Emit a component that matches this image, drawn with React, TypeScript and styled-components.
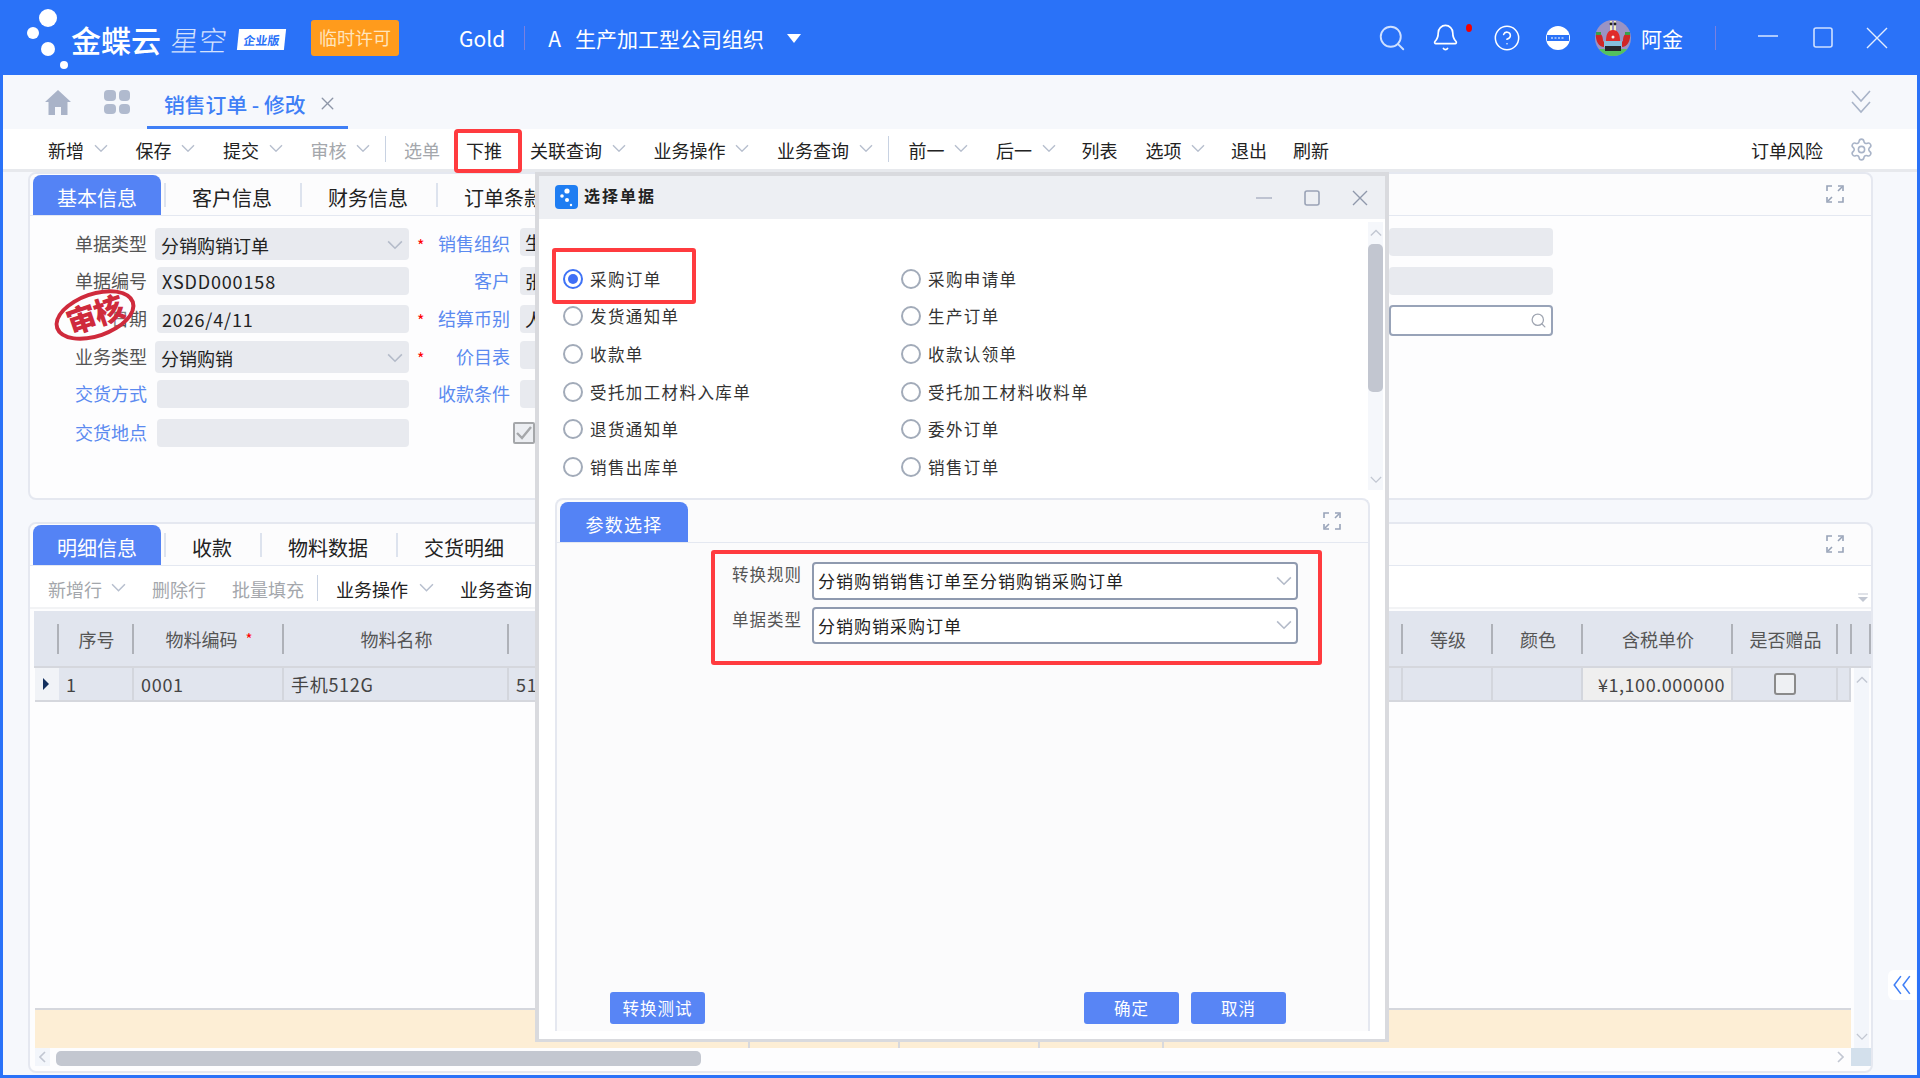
import React from 'react'
import styled, { createGlobalStyle } from 'styled-components'
import { Bell, CircleHelp, Search, Settings, X } from 'lucide-react'

const GlobalStyle = createGlobalStyle`
  html, body {
    margin: 0;
    padding: 0;
    background: #2a72f8;
  }
  * {
    box-sizing: border-box;
  }
  body {
    font-family: "Noto Sans CJK SC", "Noto Sans", sans-serif;
    color: #222;
  }
`

const Chev = ({ color = '#b7bfce', w = 14 }: { color?: string; w?: number }) => (
  <svg width={w} height={w * 0.6} viewBox="0 0 14 8" fill="none" stroke={color} strokeWidth="1.4">
    <polyline points="1,1 7,7 13,1" />
  </svg>
)

const ExpandIcon = () => (
  <svg width="18" height="18" viewBox="0 0 18 18" fill="none" stroke="#98a3b8" strokeWidth="1.6">
    <path d="M1 6V1h5M12 1h5v5M1 12v5h5M17 12v5h-5" />
    <path d="M12 6l4-4M6 12l-4 4" />
  </svg>
)

const LogoMark = () => (
  <svg width="46" height="75" viewBox="0 0 46 75">
    <g fill="#fff">
      <circle cx="23" cy="18" r="9" />
      <circle cx="8" cy="33" r="6" />
      <circle cx="23" cy="49" r="7" />
      <circle cx="39" cy="65" r="4" />
    </g>
  </svg>
)

const HomeIcon = () => (
  <svg width="26" height="25" viewBox="0 0 26 25" fill="#a9b3c8">
    <path d="M13 0L0 12h3.5v13h6.5v-8h6v8h6.500V12H26z" />
  </svg>
)

const Avatar = () => (
  <svg width="36" height="36" viewBox="0 0 36 36">
    <clipPath id="av">
      <circle cx="18" cy="18" r="18" />
    </clipPath>
    <g clipPath="url(#av)">
      <rect width="36" height="36" fill="#9a93c4" />
      <rect y="29" width="36" height="7" fill="#52c25e" />
      <rect x="15" y="1" width="2" height="14" fill="#f0eec0" />
      <rect x="19" y="1" width="2" height="14" fill="#f0eec0" />
      <circle cx="16" cy="4" r="1.4" fill="#222" />
      <circle cx="20" cy="4" r="1.4" fill="#222" />
      <path d="M18 10c6 0 7 6 7 11H11c0-5 1-11 7-11z" fill="#e02a2a" />
      <path d="M1 13c5-1 7 3 7 8l4 3-3 3c-5 0-9-6-8-14z" fill="#cf2626" />
      <path d="M35 13c-5-1-7 3-7 8l-4 3 3 3c5 0 9-6 8-14z" fill="#cf2626" />
      <rect x="1" y="12" width="5" height="3" fill="#3aa04a" />
      <rect x="30" y="12" width="5" height="3" fill="#3aa04a" />
      <rect x="9" y="21" width="18" height="6" fill="#86bedd" />
      <rect x="10" y="26" width="16" height="5" fill="#26262c" />
      <circle cx="18" cy="17" r="1.5" fill="#f5f5f5" />
    </g>
  </svg>
)

const Page = styled.div`
  position: relative;
  width: 1920px;
  height: 1078px;
  overflow: hidden;
  display: flex;
  flex-direction: column;
  background: #2a72f8;
`

const TopBar = styled.header`
  height: 75px;
  flex: none;
  display: flex;
  align-items: center;
  padding: 0 32px 0 25px;
  color: #fff;
`

const BrandMain = styled.span`
  font-size: 30px;
  font-weight: 500;
  line-height: 1;
  margin-top: 2px;
`

const BrandSub = styled.span`
  font-size: 28px;
  font-weight: 300;
  line-height: 1;
  margin: 2px 0 0 10px;
  opacity: 0.8;
  transform: skewX(-6deg);
`

const Edition = styled.span`
  margin: 4px 0 0 11px;
  width: 47px;
  height: 21px;
  background: #fff;
  color: #2a72f8;
  font-size: 12px;
  font-weight: 700;
  line-height: 21px;
  text-align: center;
  transform: skewX(-6deg);
`

const License = styled.span`
  margin-left: 26px;
  width: 88px;
  height: 36px;
  border-radius: 3px;
  background: #ff9b1c;
  color: #ffe5bd;
  font-size: 18px;
  line-height: 35px;
  text-align: center;
`

const OrgText = styled.span<{ $ml: number }>`
  margin: 2px 0 0 ${p => p.$ml}px;
  font-size: 21px;
  line-height: 1;
  white-space: nowrap;
`

const BarDivider = styled.span<{ $ml: number }>`
  margin-left: ${p => p.$ml}px;
  width: 1px;
  height: 24px;
  background: #7a80e0;
`

const Caret = styled.span`
  margin: 2px 0 0 23px;
  width: 0;
  height: 0;
  border-left: 7px solid transparent;
  border-right: 7px solid transparent;
  border-top: 9px solid #fff;
`

const BarRight = styled.div`
  margin-left: auto;
  display: flex;
  align-items: center;
`

const BarSlot = styled.span<{ $ml: number; $w?: number }>`
  position: relative;
  margin-left: ${p => p.$ml}px;
  width: ${p => p.$w ?? 24}px;
  height: 36px;
  display: flex;
  align-items: center;
  justify-content: center;
  svg {
    flex: none;
  }
`

const RedDot = styled.i`
  position: absolute;
  top: 4px;
  right: -15px;
  width: 6px;
  height: 8px;
  border-radius: 50%;
  background: #f40000;
`

const Shell = styled.div`
  flex: 1;
  min-height: 0;
  margin: 0 3px 3px;
  background: #f6f8fc;
  display: flex;
  flex-direction: column;
`

const TabStrip = styled.div`
  height: 54px;
  flex: none;
  display: flex;
  padding: 0 46px 0 42px;
  align-items: center;
`

const GridIcon = styled.div`
  margin-left: 33px;
  width: 26px;
  height: 24px;
  display: grid;
  grid-template-columns: 1fr 1fr;
  gap: 3px;
  span {
    background: #b0bace;
    border-radius: 4px;
  }
`

const PageTab = styled.div`
  margin-left: 17px;
  width: 201px;
  height: 54px;
  padding: 6px 0 0 17px;
  border-bottom: 3px solid #3f7ff6;
  display: flex;
  align-items: center;
  gap: 11px;
  color: #3f7ff6;
  font-size: 20.8px;
  font-weight: 500;
  white-space: nowrap;
`

const CollapseIcon = styled.span`
  margin-left: auto;
  display: flex;
`

const Toolbar = styled.nav`
  height: 40px;
  flex: none;
  background: #fff;
  box-shadow: 0 3px 0 #e7e9ed;
  display: flex;
  align-items: center;
  gap: 28px;
  padding: 0 43px 0 45px;
`

const ToolItem = styled.span<{ $off?: boolean; $marked?: boolean; $chevGap?: number }>`
  position: relative;
  display: inline-flex;
  align-items: center;
  gap: ${p => p.$chevGap ?? 9.5}px;
  font-size: 18px;
  line-height: 1;
  padding-top: 2px;
  color: ${p => (p.$off ? '#a4a7ac' : '#222')};
  white-space: nowrap;
  svg {
    margin-top: -4px;
  }
  ${p =>
    p.$marked
      ? `&::after {
          content: '';
          position: absolute;
          left: -14px;
          right: -20px;
          top: -10px;
          bottom: -14px;
          border: 4px solid #ff3b3f;
          border-radius: 4px;
        }`
      : ''}
`

const NoChevGap = styled.span`
  margin-left: -2px;
`

const ToolDivider = styled.span<{ $after?: number }>`
  width: 1px;
  height: 26px;
  margin: 0 ${p => -13 + (p.$after ?? 0)}px 0 -13px;
  background: #c8d2e2;
`

const ToolRight = styled.div`
  margin-left: auto;
  display: flex;
  align-items: center;
  gap: 26px;
`

const Content = styled.main`
  flex: 1;
  min-height: 0;
  padding: 3px 44px 2px 25px;
  display: flex;
  flex-direction: column;
  gap: 22px;
`

const Panel = styled.section<{ $grow?: boolean }>`
  ${p => (p.$grow ? 'flex: 1; min-height: 0;' : 'height: 328px; flex: none;')}
  background: #fdfdfe;
  border: 2px solid #e5e8f0;
  border-radius: 8px;
  display: flex;
  flex-direction: column;
`

const PanelHead = styled.div`
  height: 42px;
  flex: none;
  display: flex;
  align-items: flex-end;
  padding: 0 27px 0 3px;
  border-bottom: 1px solid #e4e8f1;
  background: #fcfcfd;
  border-radius: 8px 8px 0 0;
`

const HeadTab = styled.div<{ $active?: boolean }>`
  height: 40px;
  padding: 4px ${p => (p.$active ? 24 : 28)}px 0;
  font-size: 20px;
  line-height: 38px;
  white-space: nowrap;
  overflow: visible;
  ${p =>
    p.$active
      ? `background: #5483f5; color: #fff; border-radius: 8px 8px 0 0; margin-right: 3px;`
      : `color: #222; position: relative;
         &::before { content: ''; position: absolute; left: 0; top: 8px; height: 24px; width: 2px; background: #dde3ee; }`}
`

const HeadAction = styled.span`
  margin: 0 0 12px auto;
  display: flex;
`

const FormGrid = styled.div`
  padding: 12px 0 0;
  display: grid;
  grid-template-columns: 127px 252px 111px 150px 719px 164px;
  grid-template-rows: 39px 38px 36px 39px 39px 28px;
`

const FieldLabel = styled.span<{ $link?: boolean; $h: number }>`
  height: ${p => p.$h}px;
  padding: 0 10px 2px 0;
  display: flex;
  align-items: center;
  justify-content: flex-end;
  font-size: 18px;
  white-space: nowrap;
  color: ${p => (p.$link ? '#5b8af0' : '#555')};
`

const MidLabel = styled(FieldLabel)`
  justify-content: flex-start;
  i {
    width: 27px;
    padding: 4px 0 0 8px;
    font-style: normal;
    color: #f00;
    font-size: 16px;
  }
  b {
    margin-left: auto;
    font-weight: 400;
  }
`

const Field = styled.div<{ $select?: boolean; $latin?: boolean }>`
  height: ${p => (p.$select ? 32 : 28)}px;
  margin-left: ${p => (p.$select ? -2 : 0)}px;
  padding: ${p => (p.$select ? '2px 6px 0 6px' : '0 10px 0 5px')};
  background: #e8eaef;
  border-radius: 4px;
  display: flex;
  align-items: center;
  justify-content: space-between;
  font-size: 18px;
  letter-spacing: ${p => (p.$latin ? 0.85 : 0)}px;
  white-space: nowrap;
  overflow: hidden;
`

const SearchField = styled(Field)`
  height: 31px;
  background: #fff;
  border: 2px solid #98a3b8;
  justify-content: flex-end;
  padding-right: 4px;
`

const CheckMark = styled.span`
  width: 22px;
  height: 22px;
  margin: 3px 0 0 -7px;
  border: 2px solid #a5a7aa;
  border-radius: 2px;
  background: #eceef2;
  display: flex;
  align-items: center;
  justify-content: center;
`

const Stamp = styled.div`
  position: absolute;
  left: 53px;
  top: 292px;
  width: 84px;
  height: 46px;
  border: 4px solid #cf2a3c;
  border-radius: 50%;
  transform: rotate(-19deg);
  color: #cf2a3c;
  font-size: 30px;
  font-weight: 900;
  line-height: 35px;
  text-align: center;
  letter-spacing: -1px;
  white-space: nowrap;
  background: rgba(255, 255, 255, 0.25);
`

const SubBar = styled.div`
  height: 41px;
  flex: none;
  background: #fff;
  display: flex;
  align-items: center;
  gap: 26px;
  padding: 3px 2px 0 18px;
  margin-bottom: 4px;
  box-shadow: 0 2px 0 #f2f3f5;
`

const SortMark = styled.span`
  margin: 20px 0 0 auto;
  display: flex;
`

const TableHead = styled.div`
  height: 57px;
  flex: none;
  margin-left: 4px;
  background: #e1e5ee;
  border-bottom: 2px solid #d5d7dd;
  display: flex;
`

const HeadCell = styled.div<{ $w?: number }>`
  position: relative;
  flex: ${p => (p.$w ? `0 0 ${p.$w}px` : 1)};
  min-width: 0;
  display: flex;
  align-items: center;
  justify-content: center;
  gap: 8px;
  font-size: 18px;
  color: #555;
  white-space: nowrap;
  overflow: hidden;
  &::after {
    content: '';
    position: absolute;
    right: 0;
    top: 13px;
    height: 30px;
    width: 2px;
    background: #aeb1b8;
  }
  i {
    color: #f00;
    font-style: normal;
    font-size: 15px;
  }
`

const TableBody = styled.div`
  flex: 1;
  min-height: 0;
  margin-left: 5px;
  display: flex;
`

const BodyMain = styled.div`
  flex: 0 0 1816px;
  display: flex;
  flex-direction: column;
`

const DataRow = styled.div`
  height: 34px;
  flex: none;
  border-bottom: 2px solid #d5d7dd;
  display: flex;
`

const DataCell = styled.div<{ $w?: number; $shade?: boolean; $right?: boolean; $center?: boolean; $track?: number }>`
  flex: ${p => (p.$w ? `0 0 ${p.$w}px` : 1)};
  min-width: 0;
  padding: 0 ${p => (p.$right ? 6 : p.$center ? 0 : 7)}px;
  background: ${p => (p.$shade ? '#efefef' : '#e1e5ee')};
  border-right: 2px solid #d3d6dd;
  display: flex;
  align-items: center;
  justify-content: ${p => (p.$right ? 'flex-end' : p.$center ? 'center' : 'flex-start')};
  font-size: 18px;
  letter-spacing: ${p => p.$track ?? 0}px;
  color: #444;
  white-space: nowrap;
  overflow: hidden;
`

const ArrowCell = styled.div`
  flex: 0 0 24px;
  background: #f1f3f7;
  display: flex;
  align-items: center;
  padding-left: 8px;
  &::before {
    content: '';
    border-left: 6px solid #14305f;
    border-top: 6px solid transparent;
    border-bottom: 6px solid transparent;
  }
`

const RowCheck = styled.span`
  width: 22px;
  height: 22px;
  border: 2px solid #8a8a8a;
  border-radius: 3px;
  background: #eef0f3;
`

const BodyBlank = styled.div`
  flex: 1;
  border-bottom: 2px solid #d5d7dd;
`

const Totals = styled.div`
  height: 38px;
  flex: none;
  background: #fdeed5;
  display: flex;
`

const TotalCell = styled.div<{ $w?: number }>`
  flex: ${p => (p.$w ? `0 0 ${p.$w}px` : 1)};
  ${p => (p.$w ? 'border-right: 2px solid #d8d9dd;' : '')}
`

const VScroll = styled.div`
  width: 15px;
  margin-left: 3px;
  background: #f3f6fb;
  display: flex;
  flex-direction: column;
  align-items: center;
  justify-content: space-between;
  padding: 8px 0;
`

const HScroll = styled.div`
  height: 18px;
  flex: none;
  margin: 0 0 5px 5px;
  display: flex;
  align-items: center;
`

const HArrow = styled.span<{ $left?: boolean }>`
  width: ${p => (p.$left ? 15 : 13)}px;
  height: 18px;
  background: ${p => (p.$left ? '#f3f6fb' : 'transparent')};
  display: flex;
  align-items: center;
  justify-content: center;
  margin-left: ${p => (p.$left ? 0 : 'auto')};
`

const HThumb = styled.span`
  width: 645px;
  height: 15px;
  margin: 3px 0 0 6px;
  border-radius: 5px;
  background: #c3c7d0;
`

const ScrollCorner = styled.span`
  width: 20px;
  height: 18px;
  margin-left: 4px;
  background: #d3e0ec;
`

const SideToggle = styled.div`
  position: absolute;
  right: 4px;
  top: 970px;
  width: 28px;
  height: 30px;
  background: #fff;
  border-radius: 6px 0 0 6px;
  display: flex;
  align-items: center;
  justify-content: center;
`

/* dialog */
const Dialog = styled.div`
  position: absolute;
  left: 535px;
  top: 172px;
  width: 854px;
  height: 870px;
  border: 4px solid #d9dade;
  border-bottom-width: 3px;
  background: #fff;
  display: flex;
  flex-direction: column;
`

const DialogTitle = styled.div`
  height: 43px;
  flex: none;
  background: #edeff3;
  display: flex;
  align-items: center;
  padding: 0 17px 6px 16px;
  font-size: 16px;
  font-weight: 700;
  letter-spacing: 2px;
  gap: 6px;
`

const TitleLogo = styled.span`
  width: 23px;
  height: 24px;
  margin-top: 4px;
  border-radius: 4px;
  background: #1e7df2;
  display: flex;
`

const WinButtons = styled.div`
  margin-left: auto;
  display: flex;
  align-items: center;
  gap: 32px;
  padding-top: 6px;
`

const ChoiceArea = styled.div`
  position: relative;
  height: 271px;
  flex: none;
  display: flex;
`

const ChoiceGrid = styled.div`
  flex: 1;
  padding: 41px 0 0 24px;
  display: grid;
  grid-template-columns: 338px 1fr;
  grid-auto-rows: 37.6px;
`

const Choice = styled.label`
  display: flex;
  align-items: center;
  gap: 7px;
  font-size: 16.5px;
  letter-spacing: 1.4px;
  color: #333;
  white-space: nowrap;
`

const RadioDot = styled.span<{ $on?: boolean }>`
  width: 20px;
  height: 20px;
  flex: none;
  border-radius: 50%;
  border: 2px solid ${p => (p.$on ? '#3f73f6' : '#a2abb9')};
  background: #fff;
  display: flex;
  align-items: center;
  justify-content: center;
  &::after {
    content: '';
    width: 10px;
    height: 10px;
    border-radius: 50%;
    background: ${p => (p.$on ? '#3f6ff6' : 'transparent')};
  }
`

const RedMark = styled.div`
  position: absolute;
  left: 13px;
  top: 29px;
  width: 144px;
  height: 56px;
  border: 4px solid #ff3b3f;
  border-radius: 3px;
  pointer-events: none;
`

const DialogScroll = styled.div`
  width: 15px;
  margin: 3px 2px 0 0;
  background: #f5f7fb;
  display: flex;
  flex-direction: column;
  align-items: center;
  padding: 7px 0;
`

const ScrollThumb = styled.span`
  width: 100%;
  height: 148px;
  margin-top: 7px;
  border-radius: 5px;
  background: #c2c6d0;
`

const ScrollEnd = styled.span`
  margin-top: auto;
  display: flex;
`

const ParamPanel = styled.section`
  flex: 1;
  min-height: 0;
  margin: 8px 15px 8px 16px;
  background: #fbfbfc;
  border: 2px solid #e5e8f0;
  border-bottom: 0;
  border-radius: 8px 8px 0 0;
  display: flex;
  flex-direction: column;
`

const ParamHead = styled.div`
  height: 43px;
  flex: none;
  display: flex;
  align-items: flex-end;
  padding: 0 27px 0 3px;
  border-bottom: 1px solid #e4e8f1;
`

const ParamTab = styled.div`
  width: 128px;
  height: 40px;
  padding-top: 2px;
  background: #5483f5;
  color: #fff;
  border-radius: 8px 8px 0 0;
  font-size: 18px;
  line-height: 40px;
  text-align: center;
  letter-spacing: 1.2px;
`

const RuleBox = styled.div`
  margin: 7px 46px 0 154px;
  height: 115px;
  border: 4px solid #ff3b3f;
  border-radius: 3px;
  padding: 8px 20px 0 17px;
  display: flex;
  flex-direction: column;
  gap: 7px;
`

const RuleRow = styled.div`
  display: flex;
  gap: 10px;
`

const RuleLabel = styled.span`
  width: 70px;
  flex: none;
  font-size: 16.5px;
  letter-spacing: 1px;
  color: #555;
  white-space: nowrap;
`

const RuleSelect = styled.div`
  flex: 1;
  height: 37.5px;
  background: #fff;
  border: 2px solid #8f9aaf;
  border-radius: 4px;
  padding: 0 4px;
  display: flex;
  align-items: center;
  justify-content: space-between;
  font-size: 17px;
  letter-spacing: 1px;
  white-space: nowrap;
`

const ParamFooter = styled.div`
  margin-top: auto;
  padding: 0 82px 7px 53px;
  display: flex;
  gap: 12px;
`

const ActionButton = styled.button<{ $push?: boolean }>`
  width: 95px;
  height: 32px;
  padding: 0;
  border: 0;
  border-radius: 3px;
  background: #5885f5;
  color: #fff;
  font: inherit;
  font-size: 16.5px;
  letter-spacing: 1px;
  ${p => (p.$push ? 'margin-left: auto;' : '')}
`

const formRows = [
  { label: '单据类型', value: '分销购销订单', select: true, mid: '销售组织', midStar: true, third: '生产加工型公司组织' },
  { label: '单据编号', value: 'XSDD000158', latin: true, mid: '客户', third: '张三' },
  { label: '日期', value: '2026/4/11', latin: true, mid: '结算币别', midStar: true, third: '人民币', search: true },
  { label: '业务类型', value: '分销购销', select: true, mid: '价目表', midStar: true, third: '' },
  { label: '交货方式', link: true, value: '', mid: '收款条件', third: '' },
  { label: '交货地点', link: true, value: '', mid: '', third: '', check: true },
]

const radios = [
  ['采购订单', '采购申请单'],
  ['发货通知单', '生产订单'],
  ['收款单', '收款认领单'],
  ['受托加工材料入库单', '受托加工材料收料单'],
  ['退货通知单', '委外订单'],
  ['销售出库单', '销售订单'],
]

const toolLeft: { text: string; chev?: boolean; off?: boolean; marked?: boolean; sep?: number }[] = [
  { text: '新增', chev: true },
  { text: '保存', chev: true },
  { text: '提交', chev: true },
  { text: '审核', chev: true, off: true, sep: 5 },
  { text: '选单', off: true },
  { text: '下推', marked: true },
  { text: '关联查询', chev: true },
  { text: '业务操作', chev: true },
  { text: '业务查询', chev: true, sep: 5 },
  { text: '前一', chev: true },
  { text: '后一', chev: true },
  { text: '列表' },
  { text: '选项', chev: true },
  { text: '退出' },
  { text: '刷新' },
]

const App: React.FC = () => {
  return (
    <Page>
      <GlobalStyle />
      <TopBar>
        <LogoMark />
        <BrandMain>金蝶云</BrandMain>
        <BrandSub>星空</BrandSub>
        <Edition>企业版</Edition>
        <License>临时许可</License>
        <OrgText $ml={60}>Gold</OrgText>
        <BarDivider $ml={19} />
        <OrgText $ml={23}>A</OrgText>
        <OrgText $ml={14}>生产加工型公司组织</OrgText>
        <Caret />
        <BarRight>
          <BarSlot $ml={0}>
            <Search size={30} color="#cfe0ff" strokeWidth={1.5} />
          </BarSlot>
          <BarSlot $ml={29}>
            <Bell size={29} color="#fff" strokeWidth={1.4} />
            <RedDot />
          </BarSlot>
          <BarSlot $ml={38}>
            <CircleHelp size={28} color="#fff" strokeWidth={1.3} />
          </BarSlot>
          <BarSlot $ml={27}>
            <svg width="24" height="24" viewBox="0 0 24 24">
              <circle cx="12" cy="12" r="12" fill="#fff" />
              <rect x="1" y="9" width="22" height="6" fill="#2a72f8" />
              <path d="M5 12h14" stroke="#fff" strokeWidth="1.2" strokeDasharray="2 1.5" />
            </svg>
          </BarSlot>
          <BarSlot $ml={25} $w={36}>
            <Avatar />
          </BarSlot>
          <OrgText $ml={10}>阿金</OrgText>
          <BarDivider $ml={32} />
          <BarSlot $ml={41} $w={22}>
            <svg width="22" height="22" viewBox="0 0 22 22" fill="none" stroke="#cfe0ff" strokeWidth="1.6">
              <path d="M1 9h20" />
            </svg>
          </BarSlot>
          <BarSlot $ml={33} $w={22}>
            <svg width="22" height="24" viewBox="0 0 22 24" fill="none" stroke="#cfe0ff" strokeWidth="1.6">
              <rect x="2" y="2" width="18" height="19" rx="2" />
            </svg>
          </BarSlot>
          <BarSlot $ml={32} $w={22}>
            <svg width="22" height="24" viewBox="0 0 22 24" fill="none" stroke="#e3edff" strokeWidth="1.4">
              <path d="M1 2l20 20M21 2L1 22" />
            </svg>
          </BarSlot>
        </BarRight>
      </TopBar>

      <Shell>
        <TabStrip>
          <HomeIcon />
          <GridIcon>
            <span />
            <span />
            <span />
            <span />
          </GridIcon>
          <PageTab>
            销售订单 - 修改
            <X size={21} color="#8d96a8" strokeWidth={1.6} />
          </PageTab>
          <CollapseIcon>
            <svg width="20" height="26" viewBox="0 0 20 26" fill="none" stroke="#a9b4c8" strokeWidth="1.6">
              <path d="M1 2l9 10 9-10M1 13l9 10 9-10" />
            </svg>
          </CollapseIcon>
        </TabStrip>

        <Toolbar>
          {toolLeft.map(item => (
            <React.Fragment key={item.text}>
              <ToolItem $off={item.off} $marked={item.marked}>
                {item.chev ? item.text : <NoChevGap>{item.text}</NoChevGap>}
                {item.chev && <Chev />}
              </ToolItem>
              {item.sep !== undefined && <ToolDivider $after={item.sep} />}
            </React.Fragment>
          ))}
          <ToolRight>
            <ToolItem>订单风险</ToolItem>
            <Settings size={25} color="#a9b4c8" strokeWidth={1.5} />
          </ToolRight>
        </Toolbar>

        <Content>
          <Panel>
            <PanelHead>
              <HeadTab $active>基本信息</HeadTab>
              <HeadTab>客户信息</HeadTab>
              <HeadTab>财务信息</HeadTab>
              <HeadTab>订单条款</HeadTab>
              <HeadAction>
                <ExpandIcon />
              </HeadAction>
            </PanelHead>
            <FormGrid>
              {formRows.map(row => {
                const h = row.select ? 32 : 28
                return (
                  <React.Fragment key={row.label}>
                    <FieldLabel $link={row.link} $h={h}>
                      {row.label}
                    </FieldLabel>
                    <Field $select={row.select} $latin={row.latin}>
                      {row.value}
                      {row.select && <Chev w={16} color="#b4bbc9" />}
                    </Field>
                    <MidLabel $link $h={h}>
                      {row.midStar ? <i>*</i> : null}
                      <b>{row.mid}</b>
                    </MidLabel>
                    {row.check ? (
                      <CheckMark>
                        <svg width="16" height="14" viewBox="0 0 16 14" fill="none" stroke="#a5a7aa" strokeWidth="2.4">
                          <path d="M1 7l5 5 9-11" />
                        </svg>
                      </CheckMark>
                    ) : (
                      <Field>{row.third}</Field>
                    )}
                    <span />
                    {row.search ? (
                      <SearchField>
                        <Search size={17} color="#a0a6b2" strokeWidth={1.8} />
                      </SearchField>
                    ) : row.label === '单据类型' || row.label === '单据编号' ? (
                      <Field />
                    ) : (
                      <span />
                    )}
                  </React.Fragment>
                )
              })}
            </FormGrid>
          </Panel>

          <Panel $grow>
            <PanelHead>
              <HeadTab $active>明细信息</HeadTab>
              <HeadTab>收款</HeadTab>
              <HeadTab>物料数据</HeadTab>
              <HeadTab>交货明细</HeadTab>
              <HeadAction>
                <ExpandIcon />
              </HeadAction>
            </PanelHead>
            <SubBar>
              <ToolItem $off $chevGap={9}>
                新增行
                <Chev w={15} />
              </ToolItem>
              <ToolItem $off>删除行</ToolItem>
              <ToolItem $off>批量填充</ToolItem>
              <ToolDivider $after={5} />
              <ToolItem $chevGap={11}>
                业务操作
                <Chev w={15} />
              </ToolItem>
              <ToolItem>业务查询</ToolItem>
              <SortMark>
                <svg width="12" height="10" viewBox="0 0 12 10">
                  <path d="M1 1h10" stroke="#c2c7d2" />
                  <path d="M1 4h10L6 9z" fill="#c2c7d2" />
                </svg>
              </SortMark>
            </SubBar>
            <TableHead>
              <HeadCell $w={25} />
              <HeadCell $w={75}>序号</HeadCell>
              <HeadCell $w={150}>
                物料编码<i>*</i>
              </HeadCell>
              <HeadCell $w={225}>物料名称</HeadCell>
              <HeadCell />
              <HeadCell $w={90}>等级</HeadCell>
              <HeadCell $w={90}>颜色</HeadCell>
              <HeadCell $w={150}>含税单价</HeadCell>
              <HeadCell $w={105}>是否赠品</HeadCell>
              <HeadCell $w={14} />
              <HeadCell $w={19} />
            </TableHead>
            <TableBody>
              <BodyMain>
                <DataRow>
                  <ArrowCell />
                  <DataCell $w={75} $track={0.7}>1</DataCell>
                  <DataCell $w={150} $track={0.7}>0001</DataCell>
                  <DataCell $w={225} $track={0.7}>手机512G</DataCell>
                  <DataCell $track={0.7}>512G</DataCell>
                  <DataCell $w={90} $center />
                  <DataCell $w={90} $center />
                  <DataCell $w={150} $shade $right $track={0.55}>
                    ¥1,100.000000
                  </DataCell>
                  <DataCell $w={105} $center>
                    <RowCheck />
                  </DataCell>
                  <DataCell $w={13} $center />
                </DataRow>
                <BodyBlank />
                <Totals>
                  <TotalCell $w={715} />
                  <TotalCell $w={150} />
                  <TotalCell $w={140} />
                  <TotalCell $w={124} />
                  <TotalCell />
                </Totals>
              </BodyMain>
              <VScroll>
                <svg width="12" height="8" viewBox="0 0 14 8" fill="none" stroke="#c2c7d2" strokeWidth="1.6">
                  <polyline points="1,7 7,1 13,7" />
                </svg>
                <Chev w={12} color="#c2c7d2" />
              </VScroll>
            </TableBody>
            <HScroll>
              <HArrow $left>
                <svg width="7" height="12" viewBox="0 0 7 12" fill="none" stroke="#c2c7d2" strokeWidth="1.6">
                  <polyline points="6,1 1,6 6,11" />
                </svg>
              </HArrow>
              <HThumb />
              <HArrow>
                <svg width="7" height="12" viewBox="0 0 7 12" fill="none" stroke="#c2c7d2" strokeWidth="1.6">
                  <polyline points="1,1 6,6 1,11" />
                </svg>
              </HArrow>
              <ScrollCorner />
            </HScroll>
          </Panel>
        </Content>
      </Shell>

      <Stamp>审核</Stamp>

      <SideToggle>
        <svg width="20" height="20" viewBox="0 0 18 18" fill="none" stroke="#3f7ff6" strokeWidth="1.4">
          <path d="M8 1L2 9l6 8M16 1l-6 8 6 8" />
        </svg>
      </SideToggle>

      <Dialog>
        <DialogTitle>
          <TitleLogo>
            <svg width="23" height="24" viewBox="0 0 23 24" fill="#fff">
              <circle cx="12" cy="6" r="2.6" />
              <circle cx="7" cy="11" r="1.8" />
              <circle cx="12" cy="15" r="2" />
              <circle cx="16" cy="20" r="1.2" />
            </svg>
          </TitleLogo>
          选择单据
          <WinButtons>
            <svg width="16" height="16" viewBox="0 0 16 16" stroke="#a9b1c2" strokeWidth="1.4">
              <path d="M0 8h16" />
            </svg>
            <svg width="16" height="16" viewBox="0 0 16 16" fill="none" stroke="#9aa3b6" strokeWidth="1.6">
              <rect x="1" y="1" width="14" height="14" rx="2" />
            </svg>
            <svg width="16" height="16" viewBox="0 0 16 16" stroke="#8f98ab" strokeWidth="1.4">
              <path d="M1 1l14 14M15 1L1 15" />
            </svg>
          </WinButtons>
        </DialogTitle>

        <ChoiceArea>
          <ChoiceGrid>
            {radios.flat().map((text, i) => (
              <Choice key={text}>
                <RadioDot $on={i === 0} />
                {text}
              </Choice>
            ))}
          </ChoiceGrid>
          <RedMark />
          <DialogScroll>
            <svg width="12" height="8" viewBox="0 0 14 8" fill="none" stroke="#c2c7d2" strokeWidth="1.6">
              <polyline points="1,7 7,1 13,7" />
            </svg>
            <ScrollThumb />
            <ScrollEnd>
              <Chev w={12} color="#c2c7d2" />
            </ScrollEnd>
          </DialogScroll>
        </ChoiceArea>

        <ParamPanel>
          <ParamHead>
            <ParamTab>参数选择</ParamTab>
            <HeadAction>
              <ExpandIcon />
            </HeadAction>
          </ParamHead>
          <RuleBox>
            <RuleRow>
              <RuleLabel>转换规则</RuleLabel>
              <RuleSelect>
                分销购销销售订单至分销购销采购订单
                <Chev w={16} color="#b4bbc9" />
              </RuleSelect>
            </RuleRow>
            <RuleRow>
              <RuleLabel>单据类型</RuleLabel>
              <RuleSelect>
                分销购销采购订单
                <Chev w={16} color="#b4bbc9" />
              </RuleSelect>
            </RuleRow>
          </RuleBox>
          <ParamFooter>
            <ActionButton>转换测试</ActionButton>
            <ActionButton $push>确定</ActionButton>
            <ActionButton>取消</ActionButton>
          </ParamFooter>
        </ParamPanel>
      </Dialog>
    </Page>
  )
}

export default App
